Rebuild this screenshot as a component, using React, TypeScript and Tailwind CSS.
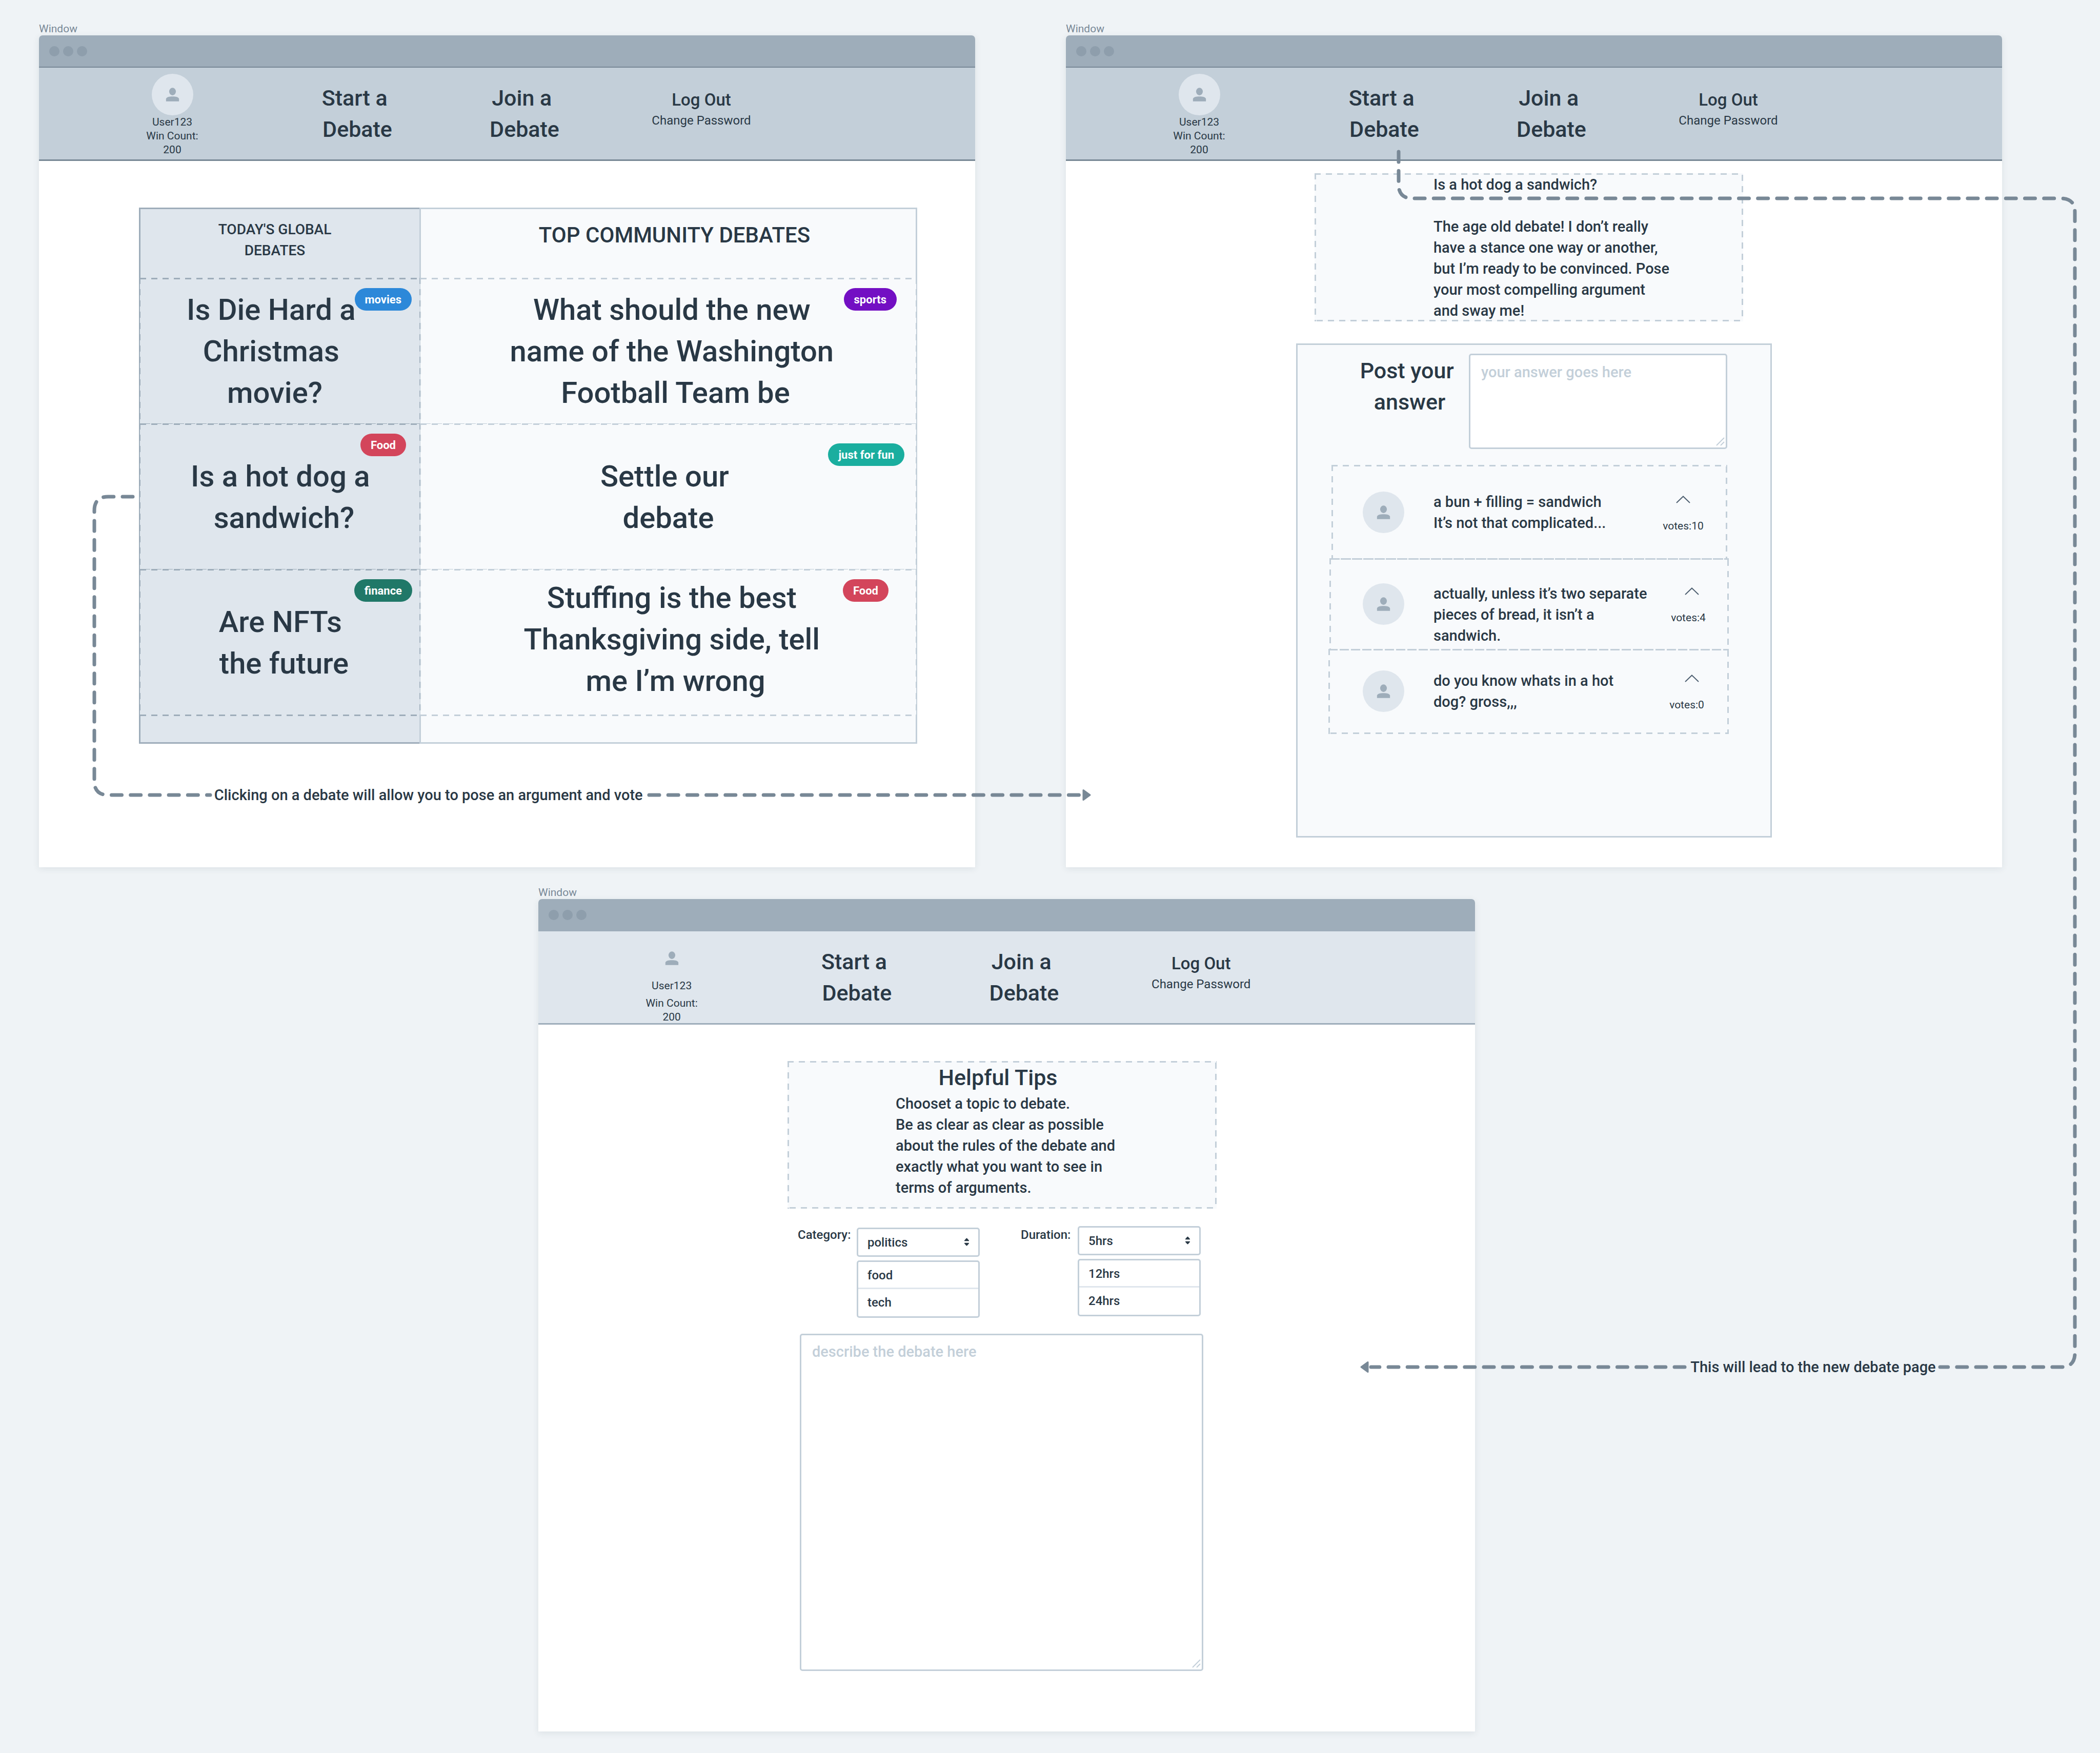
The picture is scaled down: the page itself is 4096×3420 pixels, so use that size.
import type { ReactNode } from "react";

type Tone = "light" | "dark";

/* ---------- small drawings ---------- */

function Avatar() {
  return (
    <svg viewBox="0 0 96 96" className="size-[81px] shrink-0" aria-hidden="true">
      <circle cx="48" cy="48" r="48" fill="#dfe6ed" />
      <ellipse cx="48" cy="41" rx="7.8" ry="8.7" fill="#9eadba" />
      <path d="M33 63.8V58.5C33 53.6 40.5 52.3 48 52.3S63 53.6 63 58.5V63.8Z" fill="#9eadba" />
    </svg>
  );
}

function Grip() {
  return (
    <svg
      viewBox="0 0 20 20"
      className="pointer-events-none absolute right-[5px] bottom-[5px] size-5"
      stroke="#c3cfd9"
      strokeWidth="2"
      aria-hidden="true"
    >
      <path d="M4 18L19 3M12 18L19 11" />
    </svg>
  );
}

/* ---------- dashed rules ---------- */

function DashedFrame() {
  return (
    <span aria-hidden="true" className="pointer-events-none">
      <span className="absolute inset-x-0 top-0 h-[3px] bg-[repeating-linear-gradient(90deg,#c3cfd9_0_12px,transparent_12px_22px)]" />
      <span className="absolute inset-x-0 bottom-0 h-[3px] bg-[repeating-linear-gradient(90deg,transparent_0_4px,#c3cfd9_4px_16px,transparent_16px_22px)]" />
      <span className="absolute inset-y-0 left-0 w-[3px] bg-[repeating-linear-gradient(180deg,#c3cfd9_0_12px,transparent_12px_22px)]" />
      <span className="absolute inset-y-0 right-0 w-[3px] bg-[repeating-linear-gradient(180deg,transparent_0_3px,#c3cfd9_3px_15px,transparent_15px_22px)]" />
    </span>
  );
}

const rule = {
  dark: "bg-[repeating-linear-gradient(90deg,#9eadba_0_12px,transparent_12px_22px)]",
  light: "bg-[repeating-linear-gradient(90deg,#c3cfd9_0_12px,transparent_12px_22px)]",
};
const longRule = {
  dark: "bg-[repeating-linear-gradient(90deg,#9eadba_0_20px,transparent_20px_22px)]",
  light: "bg-[repeating-linear-gradient(90deg,#c3cfd9_0_20px,transparent_20px_22px)]",
};
const side = {
  dark: "bg-[repeating-linear-gradient(180deg,#9eadba_0_12px,transparent_12px_22px)]",
  light: "bg-[repeating-linear-gradient(180deg,#c3cfd9_0_12px,transparent_12px_22px)]",
};

/* ---------- window chrome ---------- */

function NavLink({ first }: { first: string }) {
  return (
    <a
      href="#"
      className="block pt-[29px] text-center text-[43px] leading-[61px] font-[480] whitespace-pre"
    >
      {first + " "}
      <br />
      Debate
    </a>
  );
}

function AppWindow({ navTone, children }: { navTone: Tone; children: ReactNode }) {
  const pale = navTone === "light";
  return (
    <section className="w-full">
      <h2 className="text-[21px] leading-[25px] text-[#788896]">Window</h2>
      <div className="aspect-[9/8] w-full rounded-t-[7px] bg-white shadow-[0_3px_14px_rgba(30,50,70,0.09)]">
        <div className="flex h-[61px] items-center gap-[7px] rounded-t-[7px] bg-[#9eadba] pl-5">
          <span className="size-5 rounded-full bg-[#8e9eac]" />
          <span className="size-5 rounded-full bg-[#8e9eac]" />
          <span className="size-5 rounded-full bg-[#8e9eac]" />
        </div>
        <nav
          className={
            "grid h-[184px] grid-cols-[120fr_280fr_442fr_210fr_480fr_294fr] border-t-2 border-b-[3px] " +
            (pale
              ? "border-t-[#9eadba] border-b-[#9eadba] bg-[#dfe6ed]"
              : "border-[#788896] bg-[#c3cfd9]")
          }
        >
          <div className="col-start-2 flex flex-col items-center pt-3 text-center text-[21px] leading-[27px]">
            <Avatar />
            <p>User123</p>
            <p className={pale ? "mt-[7px]" : ""}>
              Win Count:
              <br />
              200
            </p>
          </div>
          <NavLink first="Start a" />
          <NavLink first="Join a" />
          <div className="flex flex-col items-center pt-[39px]">
            <a href="#" className="text-[33px] leading-[48px] font-[480]">
              Log Out
            </a>
            <a href="#" className="text-[24px] leading-8 font-[450]">
              Change Password
            </a>
          </div>
        </nav>
        {children}
      </div>
    </section>
  );
}

/* ---------- debate board ---------- */

type Debate = { lines: string[]; tag: string; pill: string; pad: string };

const globalDebates: Debate[] = [
  { lines: ["Is Die Hard a ", "Christmas ", "movie?"], tag: "movies", pill: "top-5 right-[16px] bg-[#2c88d9]", pad: "pr-5" },
  { lines: ["Is a hot dog a ", "sandwich?"], tag: "Food", pill: "top-5 right-[27px] bg-[#d3455b]", pad: "pl-4" },
  { lines: ["Are NFTs ", "the future"], tag: "finance", pill: "top-5 right-[15px] bg-[#207868]", pad: "pl-4" },
];

const communityDebates: Debate[] = [
  { lines: ["What should the new ", "name of the Washington ", "Football Team be"], tag: "sports", pill: "top-5 right-[38px] bg-[#730fc3]", pad: "pl-7" },
  { lines: ["Settle our ", "debate"], tag: "just for fun", pill: "top-[39px] right-[23px] bg-[#1aae9f]", pad: "" },
  { lines: ["Stuffing is the best ", "Thanksgiving side, tell ", "me I’m wrong"], tag: "Food", pill: "top-5 right-[54px] bg-[#d3455b]", pad: "pl-7 pb-3" },
];

function DebateList({ tone, debates }: { tone: Tone; debates: Debate[] }) {
  return (
    <ul className="-mx-px">
      {debates.map((d, i) => (
        <li
          key={d.lines[0]}
          className={
            "relative flex h-[284px] items-center justify-center pt-[3px] " +
            (tone === "dark" ? "bg-[#dfe6ed] " : "bg-[#f8fafc] ") +
            d.pad
          }
        >
          <span className={"absolute inset-x-0 top-0 h-[3px] " + rule[tone]} />
          {i > 0 && <span className={"absolute inset-x-0 top-0 h-px " + longRule[tone]} />}
          {i === debates.length - 1 && (
            <span className={"absolute inset-x-0 -bottom-[3px] h-[3px] " + rule[tone]} />
          )}
          <span className={"absolute inset-y-0 left-0 w-px " + side[tone]} />
          <span className={"absolute inset-y-0 right-0 w-px " + side[tone]} />
          <a href="#" className="text-center text-[58px] leading-[81px] font-[480] whitespace-pre">
            {d.lines.join("\n")}
          </a>
          <span
            className={
              "absolute flex h-11 items-center rounded-full px-5 text-[22px] leading-[27px] font-bold text-white " +
              d.pill
            }
          >
            {d.tag}
          </span>
        </li>
      ))}
    </ul>
  );
}

function BoardPage() {
  return (
    <div className="grid grid-cols-[547fr_971fr] pt-[91px] pr-[113px] pl-[195px]">
      <section className="border-y-[3px] border-l-[3px] border-[#9eadba] bg-[#dfe6ed] pb-[54px]">
        <h3 className="h-[134px] pt-[19px] pr-5 text-center text-[28px] leading-[41px] font-[480]">
          TODAY'S GLOBAL
          <br />
          DEBATES
        </h3>
        <DebateList tone="dark" debates={globalDebates} />
      </section>
      <section className="border-[3px] border-[#c3cfd9] bg-[#f8fafc] pb-[54px]">
        <h3 className="h-[134px] pt-5 pl-6 text-center text-[42px] leading-[61px] font-[480]">
          TOP COMMUNITY DEBATES
        </h3>
        <DebateList tone="light" debates={communityDebates} />
      </section>
    </div>
  );
}

/* ---------- answers ---------- */

const comments = [
  {
    text: "a bun + filling = sandwich\nIt’s not that complicated...",
    votes: "votes:10",
    box: "mr-[84px] ml-[66px] h-[185px] pt-[52px] pr-[41px] pl-[61px]",
    arrow: "",
  },
  {
    text: "actually, unless it’s two separate\npieces of bread, it isn’t a\nsandwich.",
    votes: "votes:4",
    box: "-mt-[3px] mr-[81px] ml-[62px] h-[180px] pt-[49px] pr-[34px] pl-[65px]",
    arrow: "ml-[14px]",
  },
  {
    text: "do you know whats in a hot\ndog? gross,,,",
    votes: "votes:0",
    box: "-mt-[3px] mr-[81px] ml-[60px] h-[166px] pt-[42px] pr-[37px] pl-[67px]",
    arrow: "ml-[20px]",
  },
];

function AnswerPage() {
  return (
    <>
      <article className="relative mt-[24px] mr-[505px] ml-[485px] bg-[#f8fafc] pt-[2px] pl-[232px] text-[29px] leading-[41px] font-[480]">
        <DashedFrame />
        <h3>Is a hot dog a sandwich?</h3>
        <p className="pt-[41px] whitespace-pre">
          {
            "The age old debate! I don’t really\nhave a stance one way or another,\nbut I’m ready to be convinced. Pose\nyour most compelling argument\nand sway me!"
          }
        </p>
      </article>
      <section className="mx-[449px] mt-[43px] h-[964px] border-[3px] border-[#c3cfd9] bg-[#f8fafc]">
        <div className="flex pt-[17px] pr-[84px] pl-[106px]">
          <label
            htmlFor="answer"
            className="w-[228px] pt-[3px] pr-[3px] text-center text-[43px] leading-[61px] font-[480] whitespace-pre"
          >
            {"Post your \nanswer"}
          </label>
          <div className="relative h-[186px] flex-1">
            <textarea
              id="answer"
              placeholder="your answer goes here"
              className="block h-full w-full resize-none rounded-[5px] border-[3px] border-[#c3cfd9] bg-white px-[21px] pt-[13px] text-[29px] leading-[41px] font-[480] placeholder:text-[#c3cfd9]"
            />
            <Grip />
          </div>
        </div>
        <ul className="pt-[31px]">
          {comments.map((c) => (
            <li key={c.votes} className={"relative flex items-start " + c.box}>
              <DashedFrame />
              <Avatar />
              <p className="flex-1 pl-[57px] text-[29px] leading-[41px] font-[480] whitespace-pre">
                {c.text}
              </p>
              <div className="flex w-[90px] shrink-0 flex-col items-center gap-[31px] pt-2">
                <button type="button" aria-label="Vote up" className={"block " + c.arrow}>
                  <svg viewBox="0 0 28 15" className="block h-[15px] w-7" fill="none" stroke="#4f6071" strokeWidth="2">
                    <path d="M1 14L14 1.5L27 14" />
                  </svg>
                </button>
                <p className="text-[21px] leading-[27px] font-[450] whitespace-pre">{c.votes}</p>
              </div>
            </li>
          ))}
        </ul>
      </section>
    </>
  );
}

/* ---------- new debate ---------- */

function Picker({ id, label, labelWidth, value, options }: { id: string; label: string; labelWidth: string; value: string; options: string[] }) {
  return (
    <div className="flex text-[24px] leading-8 font-[480]">
      <label htmlFor={id} className={"pt-px " + labelWidth}>
        {label}
      </label>
      <div className={"w-[240px] " + (id === "category" ? "pt-[3px]" : "")}>
        <div className="relative">
          <select
            id={id}
            className="block h-[57px] w-full appearance-none rounded-[5px] border-[3px] border-[#c3cfd9] bg-white pl-[18px]"
          >
            <option>{value}</option>
            {options.map((o) => (
              <option key={o}>{o}</option>
            ))}
          </select>
          <svg
            viewBox="0 0 12 18"
            className="pointer-events-none absolute top-[20px] right-5 h-[16px] w-[11px]"
            fill="#293845"
            aria-hidden="true"
          >
            <path d="M6 0.5Q6.6 0.5 7 1L11 5.5Q11.6 6.9 10.4 7H1.6Q0.4 6.9 1 5.5L5 1Q5.4 0.5 6 0.5ZM6 17.5Q6.6 17.5 7 17L11 12.5Q11.6 11.1 10.4 11H1.6Q0.4 11.1 1 12.5L5 17Q5.4 17.5 6 17.5Z" />
          </svg>
        </div>
        <ul className="mt-[7px] divide-y-[3px] divide-[#dfe6ed] rounded-[5px] border-[3px] border-[#c3cfd9] bg-white">
          {options.map((o) => (
            <li key={o} className="h-[53px] pt-[10px] pl-[18px]">
              {o}
            </li>
          ))}
        </ul>
      </div>
    </div>
  );
}

function NewDebatePage() {
  return (
    <>
      <article className="relative mt-[71px] mr-[504px] ml-[486px] h-[288px] bg-[#f8fafc] pt-[2px]">
        <DashedFrame />
        <h3 className="pr-4 text-center text-[43px] leading-[61px] font-[480]">Helpful Tips</h3>
        <p className="pl-[211px] text-[29px] leading-[41px] font-[480] whitespace-pre">
          {
            "Chooset a topic to debate.\nBe as clear as clear as possible\nabout the rules of the debate and\nexactly what you want to see in\nterms of arguments."
          }
        </p>
      </article>
      <form className="pt-[34px]" onSubmit={(e) => e.preventDefault()}>
        <div className="flex gap-20 pl-[506px]">
          <Picker id="category" label="Category:" labelWidth="w-[115px]" value="politics" options={["food", "tech"]} />
          <Picker id="duration" label="Duration:" labelWidth="w-[111px]" value="5hrs" options={["12hrs", "24hrs"]} />
        </div>
        <div className="relative mt-[31px] mr-[530px] ml-[510px]">
          <textarea
            aria-label="Debate description"
            placeholder="describe the debate here"
            className="block h-[658px] w-full resize-none rounded-[5px] border-[3px] border-[#c3cfd9] bg-white px-[21px] pt-3 text-[29px] leading-[41px] font-[480] placeholder:text-[#c3cfd9]"
          />
          <Grip />
        </div>
      </form>
    </>
  );
}

/* ---------- flow arrows between the windows ---------- */

function Connectors() {
  return (
    <>
      <svg viewBox="0 0 4096 3420" className="pointer-events-none absolute top-0 left-0 w-full" aria-hidden="true">
        <g fill="none" stroke="#788896" strokeWidth="7" strokeLinecap="round" strokeDasharray="20 17.2">
          <path d="M259 969H211Q184 969 184 996V1524Q184 1551 211 1551H410" />
          <path d="M1266 1551H2108" />
          <path d="M2728 296V360Q2728 387 2755 387H4020Q4047 387 4047 414V2640Q4047 2667 4020 2667H3784" />
          <path d="M3286 2667H2674" />
        </g>
        <g fill="#788896" stroke="#788896" strokeWidth="3" strokeLinejoin="round">
          <path d="M2113 1541.500L2126 1551L2113 1560.500Z" />
          <path d="M2668 2657.500L2655 2667L2668 2676.500Z" />
        </g>
      </svg>
      <p className="absolute top-[1531px] left-[10.2%] text-[29px] leading-[41px] font-[480]">
        Clicking on a debate will allow you to pose an argument and vote
      </p>
      <p className="absolute top-[2647px] left-[80.5%] text-[29px] leading-[41px] font-[480]">
        This will lead to the new debate page
      </p>
    </>
  );
}

export default function App() {
  return (
    <main className="relative min-h-screen bg-[#eff3f6] pt-[44px] pr-[191px] pb-[42px] pl-[76px] font-['Roboto',sans-serif] text-[#293845]">
      <div className="grid grid-cols-2 gap-x-[177px] gap-y-[37px]">
        <AppWindow navTone="dark">
          <BoardPage />
        </AppWindow>
        <AppWindow navTone="dark">
          <AnswerPage />
        </AppWindow>
        <div className="col-span-2 pr-[1028px] pl-[974px]">
          <AppWindow navTone="light">
            <NewDebatePage />
          </AppWindow>
        </div>
      </div>
      <Connectors />
    </main>
  );
}
